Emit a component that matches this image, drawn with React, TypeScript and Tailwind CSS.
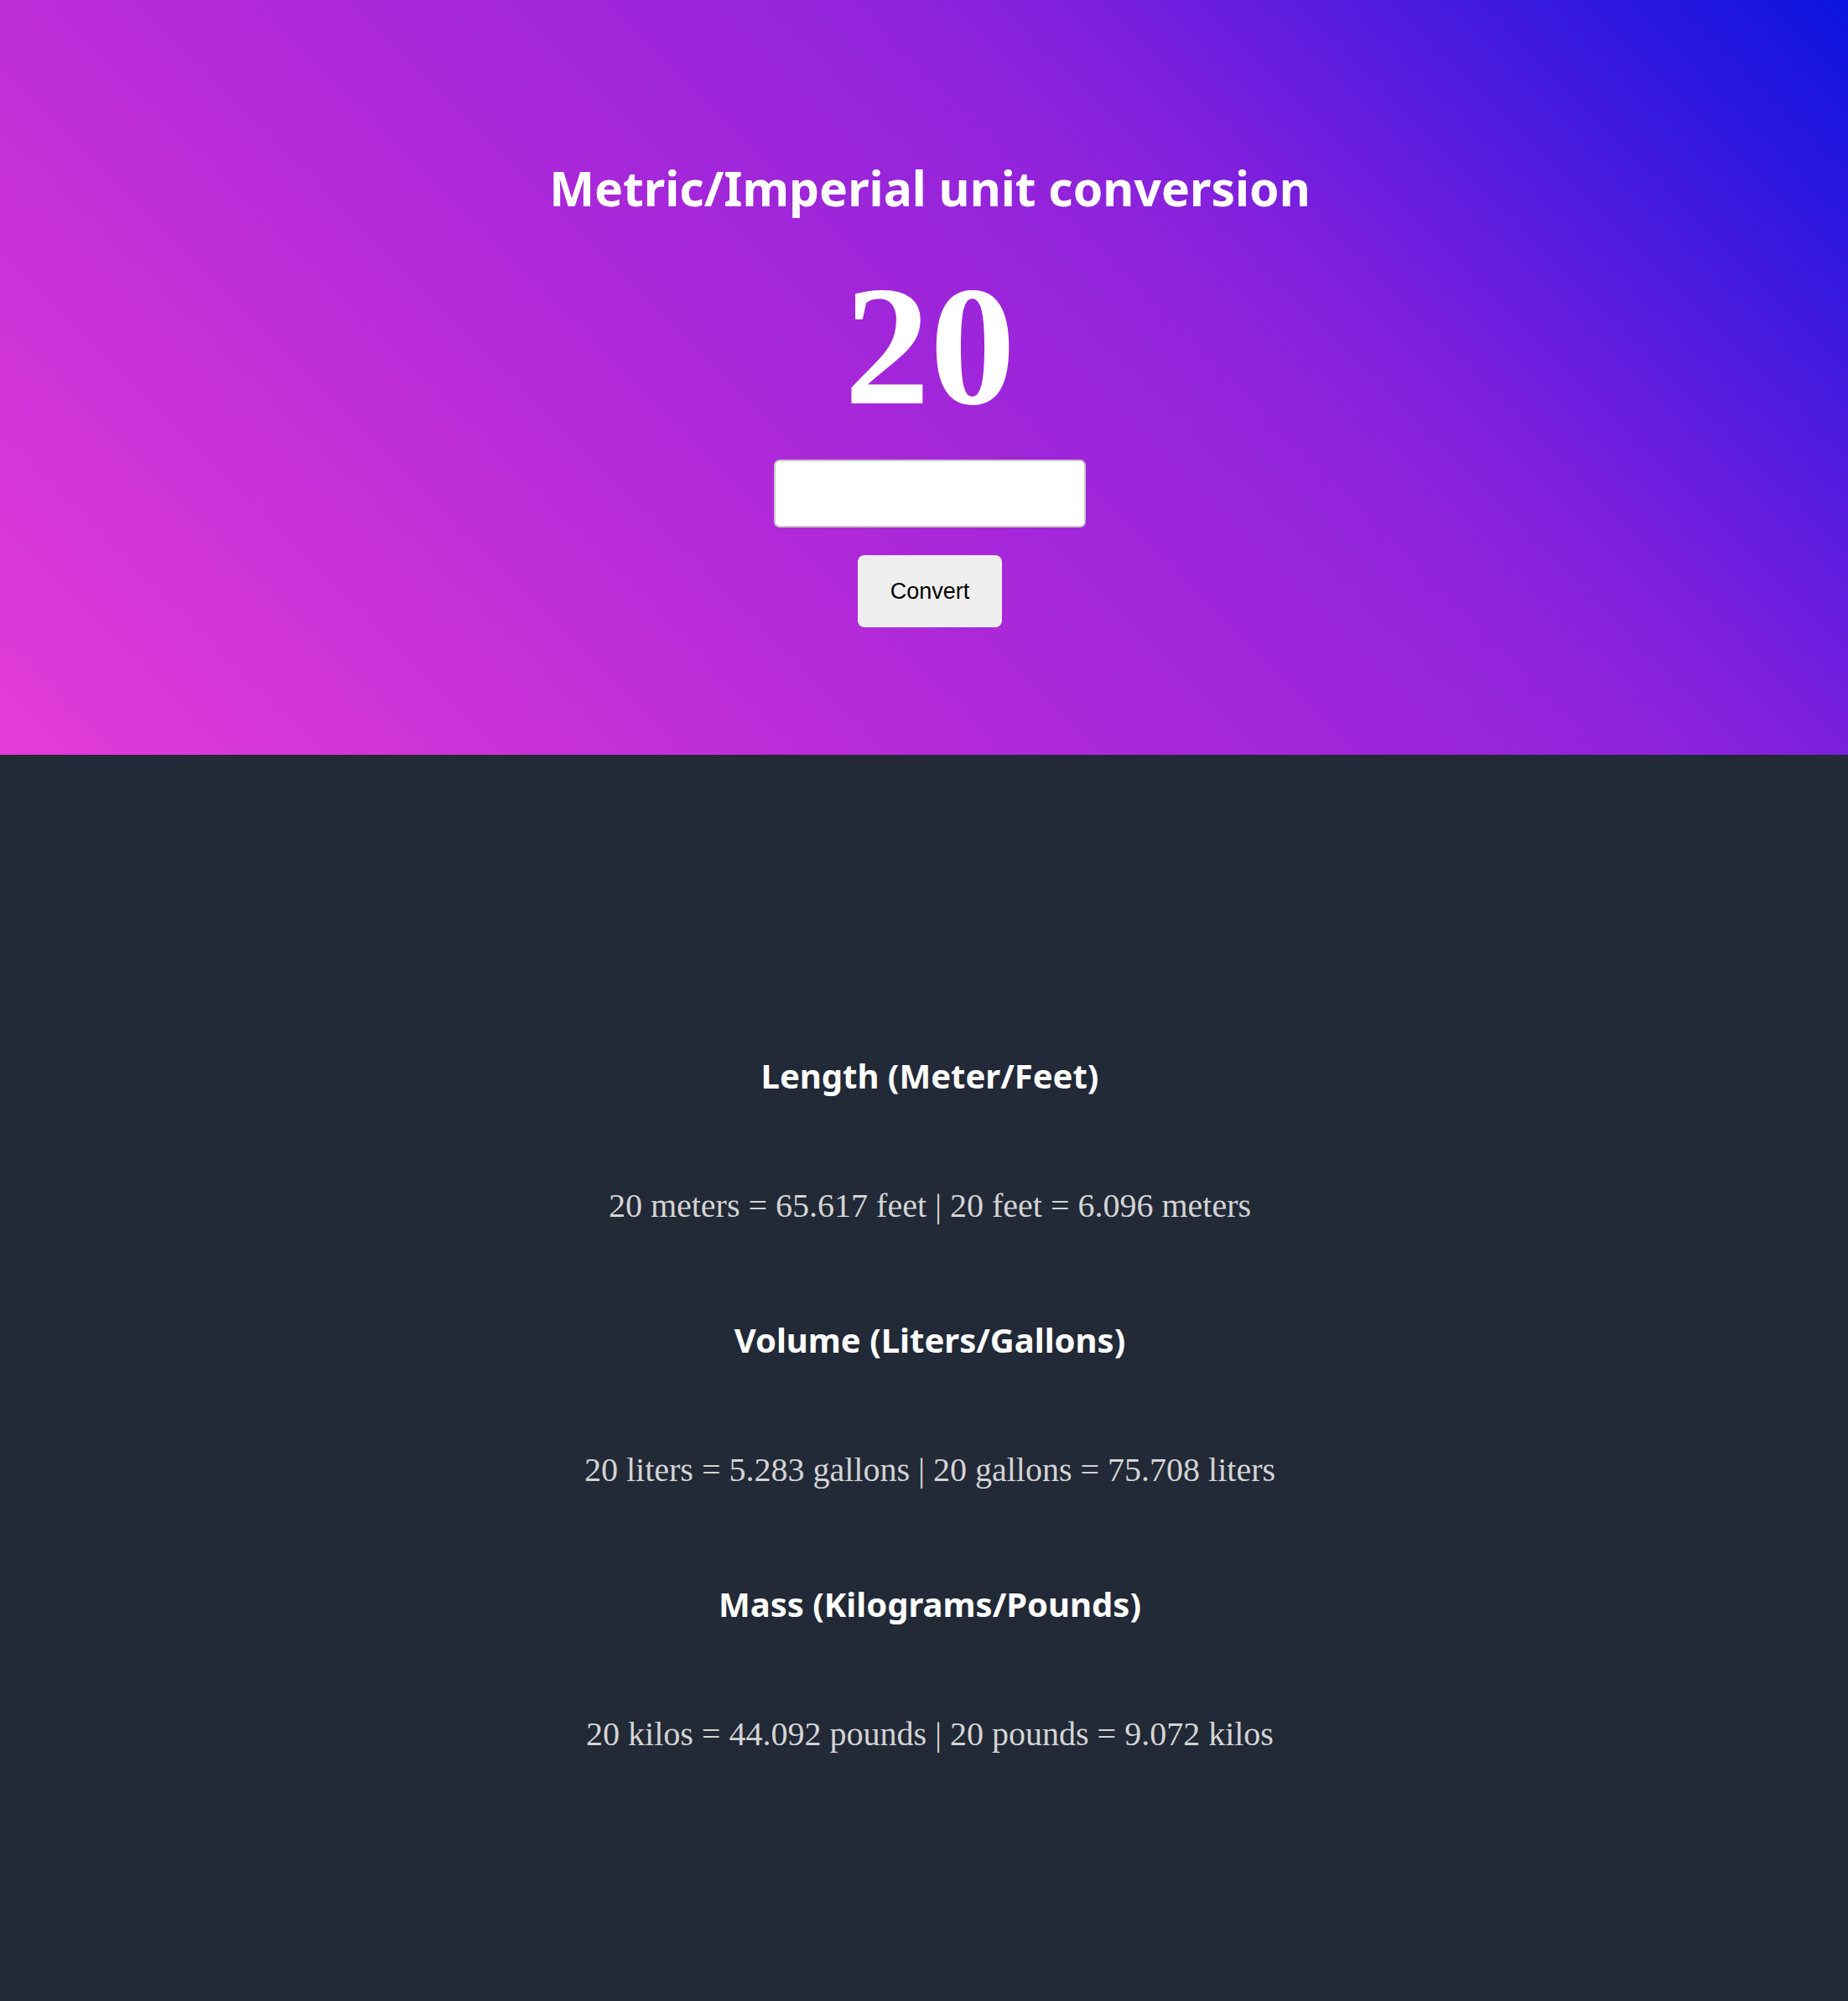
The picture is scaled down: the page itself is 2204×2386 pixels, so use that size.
import React, { useState } from 'react';

const conversions = [
  { title: 'Length (Meter/Feet)', text: (n: number) => `${n} meters = ${(n * 3.28084).toFixed(3)} feet | ${n} feet = ${(n / 3.28084).toFixed(3)} meters` },
  { title: 'Volume (Liters/Gallons)', text: (n: number) => `${n} liters = ${(n * 0.264172).toFixed(3)} gallons | ${n} gallons = ${(n / 0.264172).toFixed(3)} liters` },
  { title: 'Mass (Kilograms/Pounds)', text: (n: number) => `${n} kilos = ${(n * 2.20462).toFixed(3)} pounds | ${n} pounds = ${(n / 2.20462).toFixed(3)} kilos` },
];

const App: React.FC = () => {
  const [value, setValue] = useState(20);
  const [input, setInput] = useState('');

  const handleConvert = () => {
    const n = Number(input);
    if (input.trim() !== '' && !isNaN(n)) setValue(n);
  };

  return (
    <div className="min-h-screen flex flex-col bg-[#222937]">
      {/* Hero */}
      <section className="h-[900px] flex flex-col items-center pt-[184px] pl-[14px] bg-[linear-gradient(45deg,#e43cd8_0%,#be2dd8_29%,#b42ad8_36%,#8f23db_64%,#7a1fdd_71%,#0a14e0_100%)]">
        <h1 className="text-[57px] leading-[80px] font-bold text-white font-['Comic_Sans_MS','Noto_Sans',sans-serif]">
          Metric/Imperial unit conversion
        </h1>
        <div className="mt-[46px] text-[204px] leading-none font-bold text-white font-['Liberation_Serif','Times_New_Roman',serif]">
          {value}
        </div>
        <input
          type="text"
          value={input}
          onChange={(e) => setInput(e.target.value)}
          className="mt-[34px] w-[372px] h-[81px] bg-white border-2 border-[#c8c8c8] rounded-[7px] px-3 text-[28px] outline-none"
        />
        <button
          onClick={handleConvert}
          className="mt-[33px] w-[172px] h-[86px] bg-[#efefef] rounded-[8px] text-[27px] text-black font-['Liberation_Sans',Arial,sans-serif]"
        >
          Convert
        </button>
      </section>

      {/* Results */}
      <main className="flex-1 flex flex-col items-center pt-[353px] pb-[291px] pl-[14px]">
        {conversions.map((c, i) => (
          <div key={c.title} className={`flex flex-col items-center ${i > 0 ? 'mt-[105px]' : ''}`}>
            <h2 className="text-[40px] leading-[60px] font-bold text-white font-['Comic_Sans_MS','Noto_Sans',sans-serif]">
              {c.title}
            </h2>
            <p className="mt-[100px] text-[40px] leading-[50px] text-[#d4d4d4] font-['Liberation_Serif','Times_New_Roman',serif]">
              {c.text(value)}
            </p>
          </div>
        ))}
      </main>
    </div>
  );
};

export default App;
